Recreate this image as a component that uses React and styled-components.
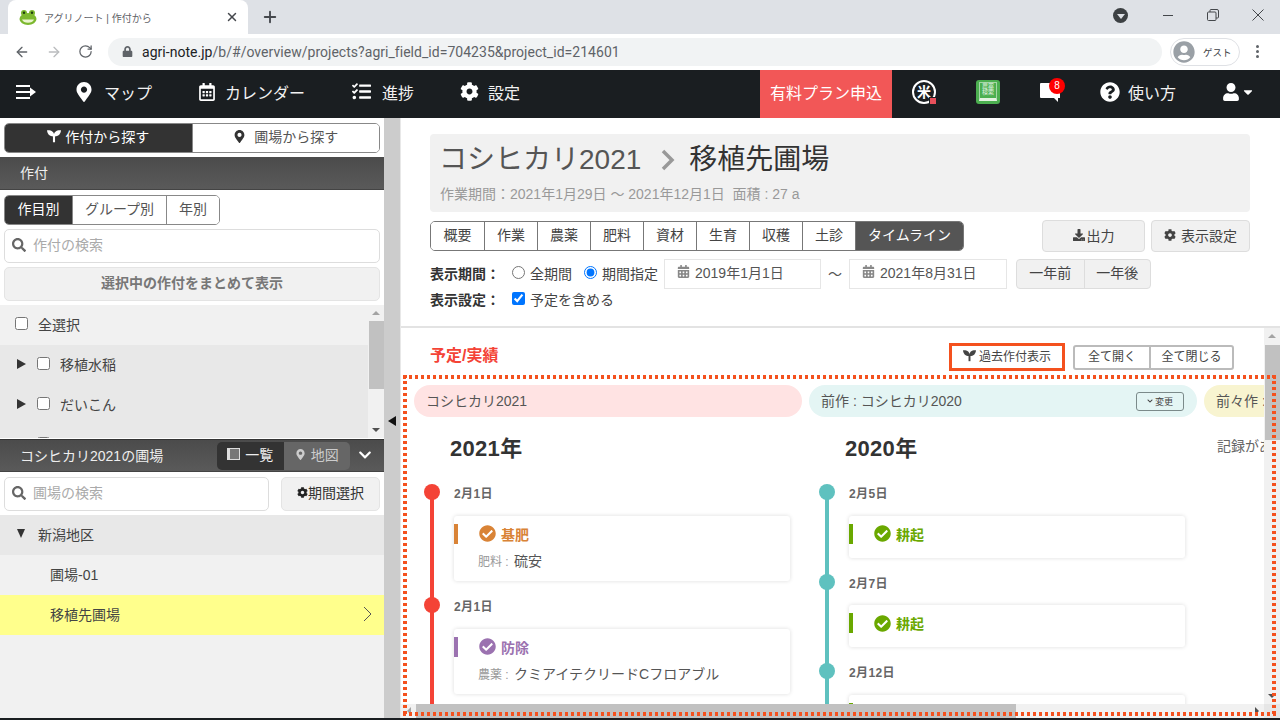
import React from 'react';
import styled, { createGlobalStyle } from 'styled-components';
import {
  FaMapMarkerAlt, FaRegCalendarAlt, FaTasks, FaCog, FaQuestionCircle, FaUser, FaCaretDown,
  FaSearch, FaChevronDown, FaCheckCircle, FaDownload, FaCalendarAlt, FaLock, FaUserCircle,
} from 'react-icons/fa';
import { ArrowLeft, ArrowRight, RotateCw, Plus, X } from 'lucide-react';

const GlobalStyle = createGlobalStyle`
  html, body { margin: 0; padding: 0; background: #fff; }
  * { box-sizing: border-box; }
  body, input, button { font-family: "Liberation Sans", "Noto Sans CJK JP", sans-serif; }
`;

const Page = styled.div`
  width: 1280px;
  height: 720px;
  overflow: hidden;
  display: flex;
  flex-direction: column;
  position: relative;
  background: #1a1e21;
`;

/* browser chrome */
const TabStrip = styled.div`
  height: 34px;
  flex: none;
  background: #dee1e6;
  display: flex;
  align-items: flex-end;
  padding-left: 8px;
`;
const BrowserTab = styled.div`
  width: 240px;
  height: 34px;
  background: #fff;
  border-radius: 8px 8px 0 0;
  display: flex;
  align-items: center;
  padding: 0 9px 0 11px;
  gap: 7px;
  font-size: 10px;
  color: #5f6368;
`;
const TabTitle = styled.span`
  flex: 1;
`;
const NewTab = styled.div`
  margin-left: 13px;
  height: 34px;
  display: flex;
  align-items: center;
  color: #45484d;
`;
const WindowControls = styled.div`
  margin-left: auto;
  height: 30px;
  align-self: flex-start;
  display: flex;
  align-items: center;
  color: #44474b;
`;
const ProfileDot = styled.div`
  width: 15px;
  height: 15px;
  border-radius: 50%;
  background: #3c4043;
  margin-right: 17px;
  display: flex;
  align-items: center;
  justify-content: center;
  &::after {
    content: '';
    border-left: 4px solid transparent;
    border-right: 4px solid transparent;
    border-top: 5px solid #dee1e6;
    margin-top: 2px;
  }
`;
const WinButton = styled.div`
  width: 45px;
  height: 28px;
  display: flex;
  align-items: center;
  justify-content: center;
`;
const AddressRow = styled.div`
  height: 36px;
  flex: none;
  background: #fff;
  display: flex;
  align-items: center;
  padding: 0 14px 1px 14px;
`;
const NavGlyphs = styled.div`
  display: flex;
  gap: 16px;
  width: 94px;
  align-items: center;
  color: #5f6368;
`;
const UrlPill = styled.div`
  width: 1054px;
  height: 28px;
  border-radius: 14px;
  background: #f1f3f4;
  display: flex;
  align-items: center;
  padding-left: 14px;
  gap: 9px;
  font-size: 14px;
  color: #5f6368;
  font-family: "Roboto", "Liberation Sans", sans-serif;
  letter-spacing: .03px;
`;
const UrlHost = styled.span`
  color: #202124;
`;
const GuestPill = styled.div`
  margin-left: 8px;
  width: 70px;
  height: 28px;
  border-radius: 14px;
  border: 1px solid #dfe1e5;
  display: flex;
  align-items: center;
  gap: 8px;
  padding-left: 2px;
  font-size: 9.5px;
  color: #3c4043;
`;
const Kebab = styled.div`
  margin-left: 16px;
  display: flex;
  flex-direction: column;
  gap: 2px;
  span {
    width: 3px;
    height: 3px;
    border-radius: 50%;
    background: #5f6368;
  }
`;

/* app nav */
const NavBar = styled.nav`
  height: 48px;
  flex: none;
  background: #1a1e21;
  display: flex;
  align-items: center;
  padding-left: 16px;
  color: #f2f2f2;
  font-size: 16px;
`;
const NavItem = styled.div`
  display: flex;
  align-items: center;
  gap: ${({ $gap }) => $gap || 10}px;
  margin-left: ${({ $ml }) => $ml || 0}px;
  margin-bottom: 5px;
  svg { flex: none; }
`;
const NavRight = styled.div`
  margin-left: auto;
  display: flex;
  align-items: center;
  height: 48px;
  padding-right: 25px;
`;
const PlanButton = styled.div`
  width: 132px;
  height: 48px;
  background: #f25757;
  display: flex;
  align-items: center;
  justify-content: center;
  font-size: 16px;
  color: #fff;
  padding-bottom: 5px;
`;
const NavIconSlot = styled.div`
  margin-left: ${({ $ml }) => $ml}px;
  margin-bottom: 5px;
  display: flex;
  align-items: center;
  position: relative;
  gap: ${({ $gap }) => $gap || 0}px;
`;
const RiceIcon = styled.div`
  width: 24px;
  height: 24px;
  border-radius: 50%;
  border: 2px solid #fff;
  display: flex;
  align-items: center;
  justify-content: center;
  font-size: 14px;
  font-weight: bold;
  line-height: 1;
  position: relative;
  color: #fff;
  &::after {
    content: '';
    position: absolute;
    right: -3px;
    bottom: -3px;
    width: 6px;
    height: 6px;
    border: 1px solid #1a1e21;
    background: #e8505b;
  }
`;
const BookIcon = styled.div`
  width: 24px;
  height: 24px;
  border-radius: 3px;
  background: #4caf50;
  padding: 2px 3px 3px;
  display: flex;
`;
const BookPage = styled.div`
  flex: 1;
  border: 1px solid #a5d6a7;
  border-bottom: 3px solid #e3f2e1;
  color: #e8f5e9;
  font-size: 6px;
  line-height: 6.5px;
  text-align: center;
`;
const Badge = styled.span`
  position: absolute;
  right: -5px;
  top: -3px;
  width: 16px;
  height: 16px;
  border-radius: 50%;
  background: #f00;
  font-size: 10px;
  color: #fff;
  display: flex;
  align-items: center;
  justify-content: center;
`;

/* main area */
const Main = styled.div`
  flex: 1;
  min-height: 0;
  display: flex;
  margin-bottom: 2px;
  background: #fff;
`;
const Sidebar = styled.aside`
  width: 384px;
  flex: none;
  display: flex;
  flex-direction: column;
  background: #fff;
  font-size: 14px;
  color: #444;
`;
const Gutter = styled.div`
  width: 16px;
  flex: none;
  background: #ccc;
  padding: 298px 0 0 4px;
  &::after {
    content: '';
    display: block;
    width: 0;
    border-top: 5px solid transparent;
    border-bottom: 5px solid transparent;
    border-right: 8px solid #111;
  }
`;
const Segmented = styled.div`
  display: flex;
  height: 30px;
  margin: ${({ $margin }) => $margin};
  width: ${({ $width }) => $width}px;
  border: 1px solid #888;
  border-radius: 5px;
  overflow: hidden;
  background: #fff;
  flex: none;
`;
const Segment = styled.div`
  width: ${({ $width }) => ($width ? `${$width}px` : 'auto')};
  flex: ${({ $width }) => ($width ? 'none' : 1)};
  display: flex;
  align-items: center;
  justify-content: center;
  gap: 4px;
  padding-bottom: 4px;
  font-size: 14px;
  background: ${({ $active }) => ($active ? '#333' : '#fff')};
  color: ${({ $active }) => ($active ? '#fff' : '#555')};
  & + & { border-left: 1px solid #888; }
`;
const PanelHead = styled.div`
  height: 33px;
  flex: none;
  margin-top: ${({ $mt }) => $mt}px;
  background: linear-gradient(#4b4b4b, #5a5a5a);
  border-bottom: 1px solid #444;
  color: #eee;
  font-size: 14px;
  display: flex;
  align-items: center;
  padding: 0 0 2px 20px;
`;
const SearchBox = styled.div`
  height: 34px;
  width: ${({ $width }) => $width}px;
  border: 1px solid #ddd;
  border-radius: 5px;
  background: #fff;
  display: flex;
  align-items: center;
  gap: 7px;
  padding: 0 0 2px 7px;
  color: #666;
  flex: none;
`;
const SearchInput = styled.input`
  border: none;
  outline: none;
  background: none;
  font-size: 14px;
  flex: 1;
  min-width: 0;
  padding: 0;
  &::placeholder { color: #aaa; }
`;
const SearchRow = styled.div`
  display: flex;
  gap: 12px;
  margin: ${({ $margin }) => $margin};
`;
const GrayButton = styled.div`
  height: 34px;
  width: ${({ $width }) => $width}px;
  background: #f1f1f1;
  border: 1px solid #e4e4e4;
  border-radius: 5px;
  display: flex;
  align-items: center;
  justify-content: center;
  padding-bottom: 4px;
  font-size: 14px;
  flex: none;
  font-weight: ${({ $bold }) => ($bold ? 'bold' : 'normal')};
  color: ${({ $bold }) => ($bold ? '#777' : '#333')};
  margin: ${({ $margin }) => $margin || 0};
`;
const CropList = styled.div`
  height: 133px;
  flex: none;
  margin-top: 4px;
  overflow: hidden;
  display: flex;
`;
const CropRows = styled.div`
  flex: 1;
  overflow: hidden;
`;
const ListRow = styled.div`
  height: 40px;
  display: flex;
  align-items: center;
  padding: 0 ${({ $right }) => $right || 0}px 3px ${({ $indent }) => $indent}px;
  background: ${({ $bg }) => $bg};
  color: #444;
  font-size: 14px;
  justify-content: space-between;
`;
const RowLabel = styled.div`
  display: flex;
  align-items: center;
`;
const Caret = styled.span`
  width: 0;
  height: 0;
  margin-right: 11px;
  ${({ $open }) => ($open
    ? `border-left: 4.5px solid transparent; border-right: 4.5px solid transparent; border-top: 9px solid #333; margin-right: 13px;`
    : `border-top: 5px solid transparent; border-bottom: 5px solid transparent; border-left: 9px solid #333;`)}
`;
const RowCheck = styled.input.attrs({ type: 'checkbox' })`
  width: 13px;
  height: 13px;
  margin: 0 10px 0 0;
  flex: none;
`;
const VScroll = styled.div`
  width: 16px;
  flex: none;
  background: #f1f1f1;
  display: flex;
  flex-direction: column;
  align-items: center;
  justify-content: space-between;
  position: relative;
`;
const ScrollArrow = styled.span`
  height: 16px;
  display: flex;
  align-items: center;
  &::after {
    content: '';
    border-left: 4px solid transparent;
    border-right: 4px solid transparent;
    ${({ $down }) => ($down ? 'border-top: 4px solid #505050;' : 'border-bottom: 4px solid #a3a3a3;')}
  }
`;
const ScrollThumb = styled.span`
  position: absolute;
  left: 1px;
  right: 0;
  top: ${({ $top }) => $top}px;
  height: ${({ $height }) => $height}px;
  background: #c1c1c1;
`;
const FieldHead = styled(PanelHead)`
  justify-content: space-between;
  padding-right: 12px;
  border-top: 1px solid #333;
`;
const ViewToggle = styled.div`
  display: flex;
  height: 28px;
  border-radius: 5px;
  overflow: hidden;
  margin: 2px 8px 0 auto;
`;
const ViewOption = styled.div`
  width: 66.5px;
  display: flex;
  align-items: center;
  justify-content: center;
  gap: 5px;
  padding-bottom: 3px;
  background: ${({ $active }) => ($active ? '#333' : '#666')};
  color: ${({ $active }) => ($active ? '#eee' : '#ccc')};
`;
const FieldList = styled.div`
  flex: 1;
  background: #f1f1f1;
`;

/* content */
const Content = styled.main`
  flex: 1;
  min-width: 0;
  display: flex;
  flex-direction: column;
  border-left: 1px solid #e8e8e8;
`;
const Summary = styled.section`
  height: 210px;
  flex: none;
  padding: 16px 30px 0 29px;
  border-bottom: 2px solid #e3e3e3;
`;
const TitleCard = styled.div`
  height: 78px;
  background: #f1f1f1;
  border-radius: 4px;
  padding: 7px 9px 0 10px;
`;
const TitleLine = styled.h1`
  margin: 0 0 0 -1px;
  height: 38px;
  font-size: 28px;
  line-height: 38px;
  font-weight: normal;
  color: #555;
  display: flex;
  align-items: center;
`;
const TitleArrow = styled.svg`
  margin: 0 14px 0 20px;
  flex: none;
`;
const TitleField = styled.span`
  color: #333;
`;
const SubLine = styled.div`
  font-size: 14px;
  line-height: 18px;
  height: 18px;
  color: #999;
  margin-top: 6px;
`;
const TabsRow = styled.div`
  display: flex;
  justify-content: space-between;
  align-items: flex-start;
  margin-top: 8px;
  height: 32px;
`;
const ViewTabs = styled.div`
  display: flex;
  height: 30px;
  margin-top: 1px;
  border: 1px solid #777;
  border-radius: 5px;
  overflow: hidden;
`;
const ViewTab = styled.div`
  width: ${({ $wide }) => ($wide ? 108 : 53)}px;
  display: flex;
  align-items: center;
  justify-content: center;
  padding-bottom: 4px;
  font-size: 14px;
  background: ${({ $active }) => ($active ? '#555' : '#fff')};
  color: ${({ $active }) => ($active ? '#fff' : '#444')};
  & + & { border-left: 1px solid #777; }
`;
const ActionGroup = styled.div`
  display: flex;
  gap: 6px;
`;
const ActionButton = styled.div`
  width: ${({ $width }) => $width}px;
  height: 32px;
  background: #f1f1f1;
  border: 1px solid #ddd;
  border-radius: 4px;
  display: flex;
  align-items: center;
  justify-content: center;
  gap: ${({ $gap }) => $gap}px;
  padding-bottom: 3px;
  font-size: 14px;
  color: #444;
`;
const FilterRow = styled.div`
  display: flex;
  align-items: center;
  font-size: 14px;
  color: #444;
  height: ${({ $height }) => $height}px;
  margin-top: ${({ $mt }) => $mt}px;
`;
const FilterLabel = styled.span`
  width: 82px;
  padding-bottom: 3px;
  font-weight: bold;
  color: #333;
`;
const Choice = styled.label`
  display: flex;
  align-items: center;
  gap: 5px;
  padding-bottom: 3px;
  margin-right: ${({ $mr }) => $mr}px;
  input { margin: 0; width: 13px; height: 13px; }
`;
const DateBox = styled.div`
  width: ${({ $width }) => $width}px;
  height: 30px;
  border: 1px solid #e6e6e6;
  display: flex;
  align-items: center;
  gap: 5px;
  padding: 0 0 4px 12px;
  color: #555;
  svg { color: #888; margin-top: -1px; }
`;
const Tilde = styled.span`
  width: 28px;
  padding-bottom: 3px;
  text-align: center;
  color: #555;
`;
const YearGroup = styled.div`
  display: flex;
  margin-left: 9px;
  height: 30px;
  border: 1px solid #ddd;
  border-radius: 4px;
  overflow: hidden;
  background: #f1f1f1;
`;
const YearButton = styled.div`
  width: 66.5px;
  display: flex;
  align-items: center;
  justify-content: center;
  padding-bottom: 4px;
  & + & { border-left: 1px solid #ddd; }
`;

const Pane = styled.section`
  flex: 1;
  min-height: 0;
  display: flex;
  flex-direction: column;
  background: #fff;
`;
const PaneRow = styled.div`
  flex: 1;
  min-height: 0;
  display: flex;
`;
const PaneBody = styled.div`
  flex: 1;
  min-width: 0;
  overflow: hidden;
  padding-top: 15px;
`;
const Toolbar = styled.div`
  display: flex;
  align-items: center;
  height: 28px;
  padding: 0 30px 0 29px;
`;
const PaneTitle = styled.h2`
  margin: 0 auto 6px 0;
  font-size: 16px;
  font-weight: bold;
  color: #f44336;
`;
const PastButton = styled.div`
  width: 116px;
  height: 28px;
  border: 3px solid #f4511e;
  display: flex;
  align-items: center;
  justify-content: center;
  gap: 3px;
  padding-bottom: 3px;
  font-size: 12px;
  color: #444;
`;
const ToggleGroup = styled.div`
  display: flex;
  margin-left: 8px;
  height: 25px;
  border: 2px solid #bbb;
  border-radius: 3px;
`;
const ToggleButton = styled.div`
  width: ${({ $width }) => $width}px;
  display: flex;
  align-items: center;
  justify-content: center;
  padding-bottom: 3px;
  font-size: 12px;
  color: #444;
  & + & { border-left: 2px solid #bbb; }
`;
const Columns = styled.div`
  display: flex;
  gap: 7px;
  margin-top: 14px;
  padding-left: 13px;
  width: 1400px;
`;
const Column = styled.div`
  width: 388px;
  flex: none;
`;
const CropPill = styled.div`
  height: 32px;
  border-radius: 16px;
  background: ${({ $bg }) => $bg};
  display: flex;
  align-items: center;
  justify-content: space-between;
  padding: 0 12px 3px;
  font-size: 14px;
  color: #555;
`;
const ChangeButton = styled.span`
  width: 48px;
  height: 19px;
  border: 1px solid #7b8a8a;
  border-radius: 3px;
  display: flex;
  align-items: center;
  justify-content: center;
  gap: 2px;
  font-size: 9px;
  color: #444;
  margin: 3px 1px 0 0;
`;
const YearHead = styled.h3`
  margin: 20px 0 20px 36px;
  height: 24px;
  line-height: 24px;
  font-size: 22px;
  letter-spacing: .3px;
  font-weight: bold;
  color: #333;
`;
const NoRecord = styled.div`
  margin-top: 20px;
  padding-left: 13px;
  font-size: 14px;
  color: #666;
  line-height: 18px;
`;
const Entry = styled.div`
  position: relative;
  padding: 0 0 12.9px 40px;
  &::before {
    content: '';
    position: absolute;
    left: 16px;
    top: 4px;
    bottom: -4px;
    width: 4px;
    background: ${({ $color }) => $color};
  }
  &::after {
    content: '';
    position: absolute;
    left: 10px;
    top: 3px;
    width: 16px;
    height: 16px;
    border-radius: 50%;
    background: ${({ $color }) => $color};
  }
`;
const DateLabel = styled.div`
  height: 22px;
  line-height: 26px;
  font-size: 12px;
  font-weight: bold;
  letter-spacing: .4px;
  color: #666;
  margin-bottom: 12.9px;
`;
const WorkCard = styled.div`
  position: relative;
  width: 336px;
  height: ${({ $tall }) => ($tall ? 65 : 41.8)}px;
  background: #fff;
  border-radius: 3px;
  box-shadow: 0 0 4px rgba(0, 0, 0, .14);
  padding: 9px 0 0 25px;
  &::before {
    content: '';
    position: absolute;
    left: 0;
    top: 8px;
    width: 4px;
    height: 20px;
    background: ${({ $color }) => $color};
  }
`;
const WorkTitle = styled.div`
  display: flex;
  align-items: center;
  gap: 5px;
  height: 18px;
  font-size: 14px;
  font-weight: bold;
  color: ${({ $color }) => $color};
`;
const WorkDetail = styled.div`
  margin-top: 8px;
  margin-left: -1px;
  font-size: 14px;
  color: #555;
  line-height: 20px;
`;
const DetailKey = styled.span`
  font-size: 12px;
  color: #999;
  margin-right: 2px;
`;
const HScroll = styled.div`
  height: 14px;
  flex: none;
  background: #f1f1f1;
  display: flex;
  align-items: center;
`;
const HArrow = styled.span`
  width: 15px;
  display: flex;
  justify-content: center;
  &::after {
    content: '';
    border-top: 4px solid transparent;
    border-bottom: 4px solid transparent;
    ${({ $right }) => ($right ? 'border-left: 4px solid #505050;' : 'border-right: 4px solid #a3a3a3;')}
  }
`;
const HThumb = styled.div`
  width: 600px;
  height: 14px;
  background: #c1c1c1;
  margin-right: auto;
`;
const ScrollCorner = styled.div`
  width: 16px;
  height: 14px;
  background: #e6e6e6;
`;
const DottedFrame = styled.div`
  position: absolute;
  left: 403px;
  top: 375px;
  width: 873px;
  height: 341px;
  pointer-events: none;
  background:
    repeating-linear-gradient(90deg, #f4511e 0 3px, transparent 3px 6px) top left / 100% 4px no-repeat,
    repeating-linear-gradient(90deg, #f4511e 0 3px, transparent 3px 6px) bottom left / 100% 4px no-repeat,
    repeating-linear-gradient(180deg, #f4511e 0 3px, transparent 3px 6px) top left / 4px 100% no-repeat,
    repeating-linear-gradient(180deg, #f4511e 0 3px, transparent 3px 6px) top right / 4px 100% no-repeat;
`;

const Sprout = ({ size = 14, color = 'currentColor' }) => (
  <svg width={size} height={size} viewBox="0 0 16 16" fill={color}>
    <path d="M6.800 7h2.400v8H6.800z" />
    <path d="M0 1.500c4.500-.5 8.500 1.500 8.500 7C4 9 .5 7 0 1.500z" />
    <path d="M16 1.500c-4.500-.5-8.500 1.500-8.500 7C12 9 15.500 7 16 1.500z" />
  </svg>
);

const Frog = () => (
  <svg width="18" height="18" viewBox="0 0 18 18">
    <ellipse cx="9" cy="11" rx="8.500" ry="6" fill="#7cb82f" />
    <circle cx="5" cy="5" r="3" fill="#7cb82f" />
    <circle cx="13" cy="5" r="3" fill="#7cb82f" />
    <circle cx="5" cy="4.800" r="1.200" fill="#1f3d10" />
    <circle cx="13" cy="4.800" r="1.200" fill="#1f3d10" />
    <path d="M3 11.500h12c-1 2.500-3 3.200-6 3.200s-5-.7-6-3.200z" fill="#eaf5cf" />
  </svg>
);

const MenuArrow = () => (
  <svg width="20" height="16" viewBox="0 0 20 16" fill="#fff">
    <path d="M0 1h14v2H0zM0 7h16v2H0zM0 13h14v2H0z" />
    <path d="M14 3.500 20 8l-6 4.500z" />
  </svg>
);

const Bubble = () => (
  <svg width="20" height="22" viewBox="0 0 20 22" fill="#fff">
    <path d="M1 2h18a1 1 0 0 1 1 1v14h-2v4l-4-4H1a1 1 0 0 1-1-1V3a1 1 0 0 1 1-1z" />
  </svg>
);

const RestoreGlyph = () => (
  <svg width="12" height="12" viewBox="0 0 12 12" fill="none" stroke="currentColor">
    <path d="M3 3V1.500a1 1 0 0 1 1-1h6a1.500 1.500 0 0 1 1.500 1.500v6a1 1 0 0 1-1 1H9" />
    <rect x=".5" y="3" width="8.500" height="8.500" rx="1" />
  </svg>
);

const MinGlyph = () => (
  <svg width="12" height="12" viewBox="0 0 12 12" stroke="currentColor"><path d="M1 6.500h10" /></svg>
);

const CloseGlyph = () => (
  <svg width="12" height="12" viewBox="0 0 12 12" stroke="currentColor" fill="none"><path d="M.5.5l11 11M11.500.5l-11 11" /></svg>
);

const ListBook = () => (
  <svg width="13" height="12" viewBox="0 0 13 12">
    <rect x="0" y="0" width="13" height="12" fill="#ddd" />
    <rect x="3" y="1" width="9" height="10" fill="#777" />
  </svg>
);

const ThinChevron = () => (
  <svg width="9" height="16" viewBox="0 0 9 16" fill="none" stroke="#555">
    <path d="M1 1l7 7-7 7" />
  </svg>
);

const tabs = ['概要', '作業', '農薬', '肥料', '資材', '生育', '収穫', '土診'];
const crops = ['移植水稲', 'だいこん', 'キャベツ'];

const ORANGE = '#d98336';
const PURPLE = '#9b72b0';
const GREEN = '#6aa800';
const RED = '#f44336';
const TEAL = '#5fc1bf';

const current = [
  { date: '2月1日', title: '基肥', color: ORANGE, key: '肥料', value: '硫安' },
  { date: '2月1日', title: '防除', color: PURPLE, key: '農薬', value: 'クミアイテクリードCフロアブル' },
];
const previous = [
  { date: '2月5日', title: '耕起', color: GREEN },
  { date: '2月7日', title: '耕起', color: GREEN },
  { date: '2月12日', title: '耕起', color: GREEN },
];

const Timeline = ({ items, line }) => items.map((item, index) => (
  <Entry key={index} $color={line}>
    <DateLabel>{item.date}</DateLabel>
    <WorkCard $tall={!!item.key} $color={item.color}>
      <WorkTitle $color={item.color}>
        <FaCheckCircle size={17} />
        {item.title}
      </WorkTitle>
      {item.key && (
        <WorkDetail>
          <DetailKey>{item.key} : </DetailKey>
          {item.value}
        </WorkDetail>
      )}
    </WorkCard>
  </Entry>
));

const App = () => (
  <Page>
    <GlobalStyle />
    <TabStrip>
      <BrowserTab>
        <Frog />
        <TabTitle>アグリノート | 作付から</TabTitle>
        <X size={14} color="#45484d" strokeWidth={2.5} />
      </BrowserTab>
      <NewTab><Plus size={18} strokeWidth={2.5} /></NewTab>
      <WindowControls>
        <ProfileDot />
        <WinButton><MinGlyph /></WinButton>
        <WinButton><RestoreGlyph /></WinButton>
        <WinButton><CloseGlyph /></WinButton>
      </WindowControls>
    </TabStrip>
    <AddressRow>
      <NavGlyphs>
        <ArrowLeft size={16} />
        <ArrowRight size={16} color="#babcbe" />
        <RotateCw size={15} />
      </NavGlyphs>
      <UrlPill>
        <FaLock size={11} />
        <span><UrlHost>agri-note.jp</UrlHost>/b/#/overview/projects?agri_field_id=704235&amp;project_id=214601</span>
      </UrlPill>
      <GuestPill>
        <FaUserCircle size={22} color="#9aa0a6" />
        ゲスト
      </GuestPill>
      <Kebab><span /><span /><span /></Kebab>
    </AddressRow>
    <NavBar>
      <NavItem><MenuArrow /></NavItem>
      <NavItem $ml={38} $gap={10}><FaMapMarkerAlt size={20} color="#fff" />マップ</NavItem>
      <NavItem $ml={46} $gap={9}><FaRegCalendarAlt size={18} color="#fff" />カレンダー</NavItem>
      <NavItem $ml={47} $gap={11}><FaTasks size={19} color="#fff" />進捗</NavItem>
      <NavItem $ml={46} $gap={9}><FaCog size={19} color="#fff" />設定</NavItem>
      <NavRight>
        <PlanButton>有料プラン申込</PlanButton>
        <NavIconSlot $ml={20}><RiceIcon>米</RiceIcon></NavIconSlot>
        <NavIconSlot $ml={40}>
          <BookIcon><BookPage>農薬<br />検索</BookPage></BookIcon>
        </NavIconSlot>
        <NavIconSlot $ml={40}>
          <Bubble />
          <Badge>8</Badge>
        </NavIconSlot>
        <NavIconSlot $ml={40} $gap={8}><FaQuestionCircle size={20} color="#fff" />使い方</NavIconSlot>
        <NavIconSlot $ml={46} $gap={1}>
          <FaUser size={18} color="#fff" />
          <FaCaretDown size={14} color="#fff" />
        </NavIconSlot>
      </NavRight>
    </NavBar>
    <Main>
      <Sidebar>
        <Segmented $width={376} $margin="5px 0 0 4px">
          <Segment $active><Sprout />作付から探す</Segment>
          <Segment><FaMapMarkerAlt size={13} color="#333" />&nbsp;圃場から探す</Segment>
        </Segmented>
        <PanelHead $mt={4}>作付</PanelHead>
        <Segmented $width={216} $margin="5px 0 0 4px">
          <Segment $active $width={67}>作目別</Segment>
          <Segment $width={94}>グループ別</Segment>
          <Segment>年別</Segment>
        </Segmented>
        <SearchRow $margin="4px 0 0 4px">
          <SearchBox $width={376}>
            <FaSearch size={14} />
            <SearchInput placeholder="作付の検索" />
          </SearchBox>
        </SearchRow>
        <GrayButton $width={376} $bold $margin="4px 0 0 4px">選択中の作付をまとめて表示</GrayButton>
        <CropList>
          <CropRows>
            <ListRow $indent={15} $bg="#f1f1f1">
              <RowLabel><RowCheck />全選択</RowLabel>
            </ListRow>
            {crops.map((crop) => (
              <ListRow key={crop} $indent={17} $bg="#e8e8e8">
                <RowLabel><Caret /><RowCheck />{crop}</RowLabel>
              </ListRow>
            ))}
          </CropRows>
          <VScroll>
            <ScrollArrow />
            <ScrollThumb $top={16} $height={68} />
            <ScrollArrow $down />
          </VScroll>
        </CropList>
        <FieldHead $mt={1}>
          コシヒカリ2021の圃場
          <ViewToggle>
            <ViewOption $active><ListBook />一覧</ViewOption>
            <ViewOption><FaMapMarkerAlt size={11} />地図</ViewOption>
          </ViewToggle>
          <FaChevronDown size={14} color="#fff" />
        </FieldHead>
        <SearchRow $margin="5px 0 4px 4px">
          <SearchBox $width={265}>
            <FaSearch size={14} />
            <SearchInput placeholder="圃場の検索" />
          </SearchBox>
          <GrayButton $width={99}><FaCog size={11} color="#222" />期間選択</GrayButton>
        </SearchRow>
        <FieldList>
          <ListRow $indent={17} $bg="#e8e8e8">
            <RowLabel><Caret $open />新潟地区</RowLabel>
          </ListRow>
          <ListRow $indent={50} $bg="#f1f1f1">圃場-01</ListRow>
          <ListRow $indent={50} $bg="#ffff8c" $right={12}>
            移植先圃場
            <ThinChevron />
          </ListRow>
        </FieldList>
      </Sidebar>
      <Gutter />
      <Content>
        <Summary>
          <TitleCard>
            <TitleLine>
              コシヒカリ2021
              <TitleArrow width="14" height="22" viewBox="0 0 14 22" fill="none" stroke="#999" strokeWidth="3.500">
                <path d="M2 2l9 9-9 9" />
              </TitleArrow>
              <TitleField>移植先圃場</TitleField>
            </TitleLine>
            <SubLine>作業期間：2021年1月29日 ～ 2021年12月1日&nbsp;&nbsp;面積 : 27 a</SubLine>
          </TitleCard>
          <TabsRow>
            <ViewTabs>
              {tabs.map((tab) => <ViewTab key={tab}>{tab}</ViewTab>)}
              <ViewTab $active $wide>タイムライン</ViewTab>
            </ViewTabs>
            <ActionGroup>
              <ActionButton $width={103} $gap={2}><FaDownload size={12} />出力</ActionButton>
              <ActionButton $width={99} $gap={5}><FaCog size={12} />表示設定</ActionButton>
            </ActionGroup>
          </TabsRow>
          <FilterRow $height={30} $mt={7}>
            <FilterLabel>表示期間：</FilterLabel>
            <Choice $mr={12}><input type="radio" name="span" />全期間</Choice>
            <Choice $mr={6}><input type="radio" name="span" defaultChecked />期間指定</Choice>
            <DateBox $width={157}><FaCalendarAlt size={13} />2019年1月1日</DateBox>
            <Tilde>～</Tilde>
            <DateBox $width={158}><FaCalendarAlt size={13} />2021年8月31日</DateBox>
            <YearGroup>
              <YearButton>一年前</YearButton>
              <YearButton>一年後</YearButton>
            </YearGroup>
          </FilterRow>
          <FilterRow $height={22} $mt={0}>
            <FilterLabel>表示設定：</FilterLabel>
            <Choice $mr={0}><input type="checkbox" defaultChecked />予定を含める</Choice>
          </FilterRow>
        </Summary>
        <Pane>
          <PaneRow>
            <PaneBody>
              <Toolbar>
                <PaneTitle>予定/実績</PaneTitle>
                <PastButton><Sprout size={13} />過去作付表示</PastButton>
                <ToggleGroup>
                  <ToggleButton $width={74}>全て開く</ToggleButton>
                  <ToggleButton $width={83}>全て閉じる</ToggleButton>
                </ToggleGroup>
              </Toolbar>
              <Columns>
                <Column>
                  <CropPill $bg="#ffe3e3">コシヒカリ2021</CropPill>
                  <YearHead>2021年</YearHead>
                  <Timeline items={current} line={RED} />
                </Column>
                <Column>
                  <CropPill $bg="#e4f5f4">
                    前作 : コシヒカリ2020
                    <ChangeButton><FaChevronDown size={6} />変更</ChangeButton>
                  </CropPill>
                  <YearHead>2020年</YearHead>
                  <Timeline items={previous} line={TEAL} />
                </Column>
                <Column>
                  <CropPill $bg="#f8f4d0">前々作 : コシヒカリ2019</CropPill>
                  <NoRecord>記録がありません</NoRecord>
                </Column>
              </Columns>
            </PaneBody>
            <VScroll>
              <ScrollArrow />
              <ScrollThumb $top={17} $height={95} />
              <ScrollArrow $down />
            </VScroll>
          </PaneRow>
          <HScroll>
            <HArrow />
            <HThumb />
            <HArrow $right />
            <ScrollCorner />
          </HScroll>
        </Pane>
      </Content>
    </Main>
    <DottedFrame />
  </Page>
);

export default App;
